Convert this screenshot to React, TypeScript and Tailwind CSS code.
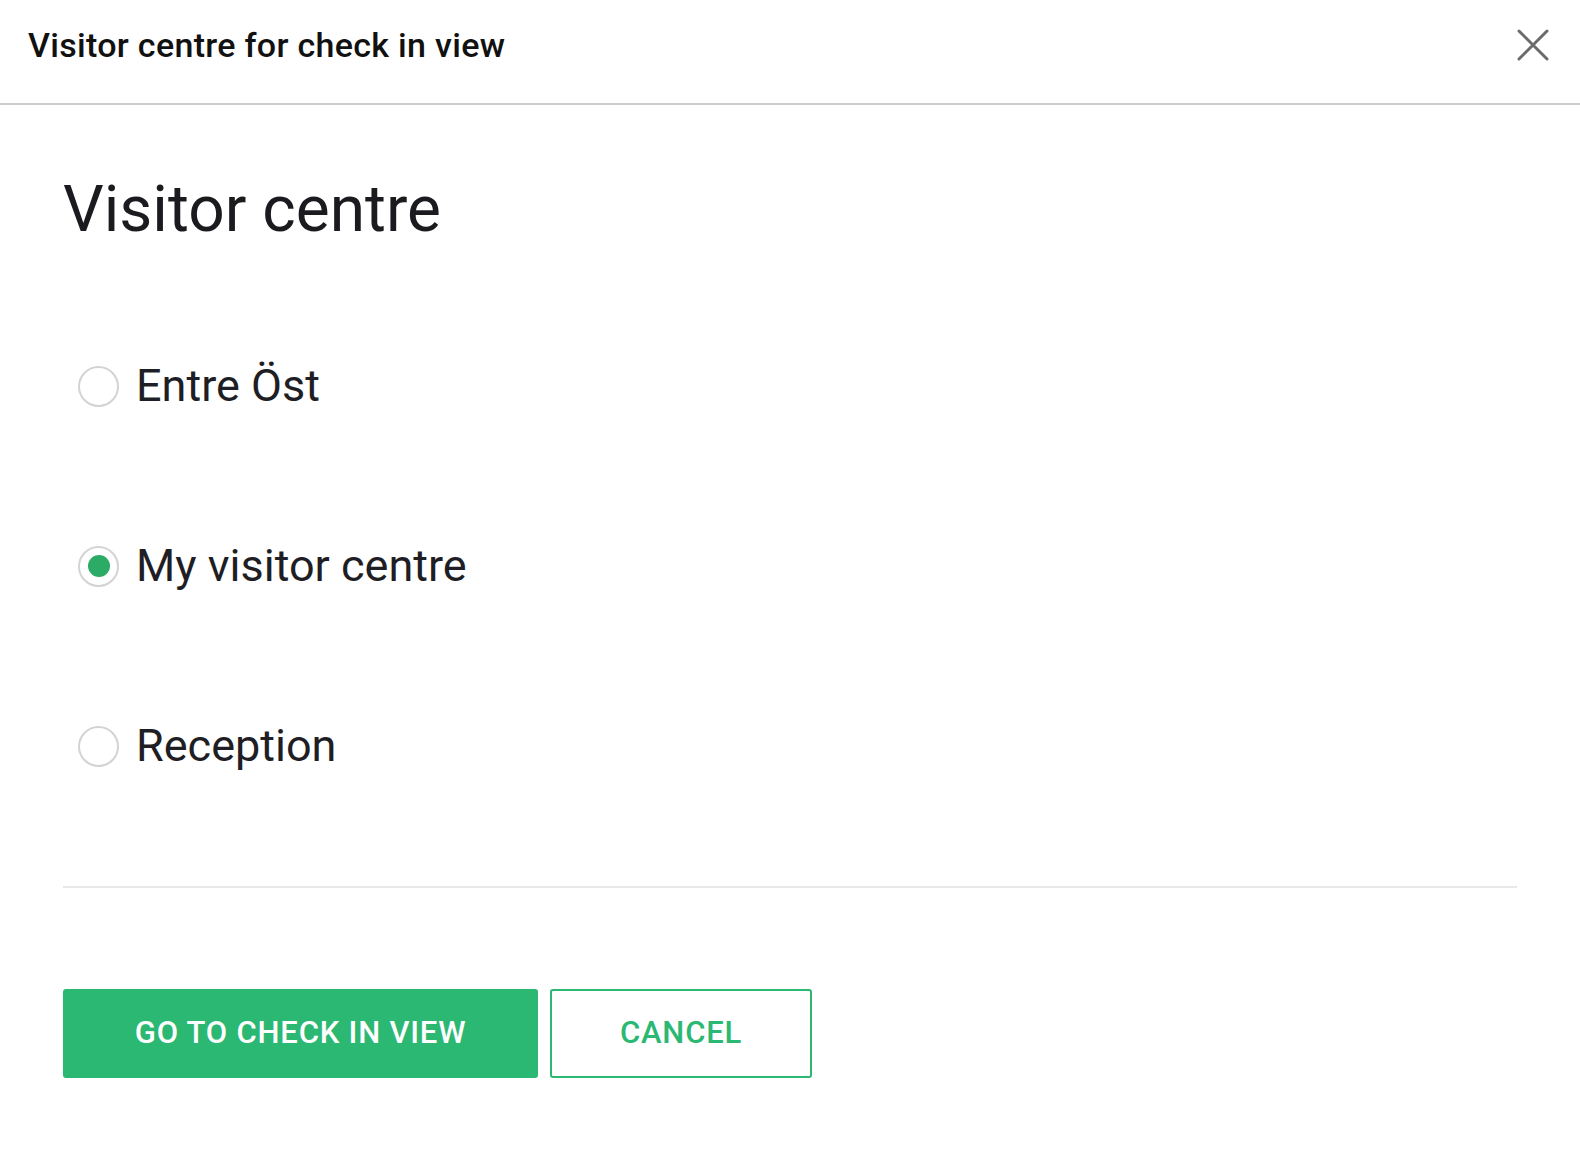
import { useState } from 'react';

const options = ['Entre Öst', 'My visitor centre', 'Reception'];

function Radio({ checked }: { checked: boolean }) {
  return (
    <span className="w-[41px] h-[41px] rounded-full border-2 border-[#d3d3d3] bg-white flex items-center justify-center shrink-0">
      {checked && <span className="w-[22px] h-[22px] rounded-full bg-[#2bab66]" />}
    </span>
  );
}

export default function App() {
  const [selected, setSelected] = useState(1);

  return (
    <div className="w-[1580px] h-[1162px] bg-white text-[#1b1b1f] font-['Roboto','Liberation_Sans',sans-serif]">
      {/* Header */}
      <header className="h-[105px] flex items-center justify-between pl-[28px] pr-[31px] pb-[13px] border-b-2 border-[#cdcdcd]">
        <h1 className="text-[34px] font-medium leading-none tracking-[0.3px] text-[#111]">Visitor centre for check in view</h1>
        <button className="w-[32px] h-[32px] flex items-center justify-center text-[#6b6b6b]">
          <svg width="32" height="32" viewBox="0 0 32 32" fill="none" stroke="currentColor" strokeWidth="3" strokeLinecap="round">
            <path d="M2 2 L30 30 M30 2 L2 30" />
          </svg>
        </button>
      </header>

      <main className="px-[63px]">
        <h2 className="mt-[73px] text-[64px] leading-[64px] font-normal text-[#1b1b1f]">Visitor centre</h2>

        {/* Options */}
        <div className="mt-[114px] flex flex-col gap-[120px] pl-[15px]">
          {options.map((label, i) => (
            <label
              key={label}
              onClick={() => setSelected(i)}
              className="h-[60px] flex items-center gap-[17px] cursor-pointer"
            >
              <Radio checked={selected === i} />
              <span className="text-[45px] leading-[60px] text-[#1e1e24]">{label}</span>
            </label>
          ))}
        </div>

        <div className="mt-[110px] h-[2px] bg-[#e8e8e8]" />

        {/* Actions */}
        <div className="mt-[101px] flex gap-[12px]">
          <button className="h-[89px] w-[475px] rounded-[3px] bg-[#2bb873] text-white text-[31px] font-medium tracking-[0.8px] uppercase">
            Go to check in view
          </button>
          <button className="h-[89px] w-[262px] rounded-[3px] border-2 border-[#2bb873] bg-white text-[#2bb873] text-[31px] font-medium tracking-[0.8px] uppercase">
            Cancel
          </button>
        </div>
      </main>
    </div>
  );
}
